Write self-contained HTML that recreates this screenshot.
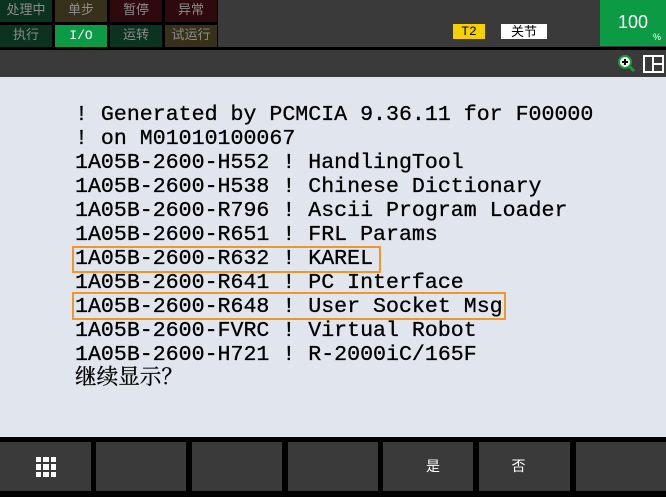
<!DOCTYPE html>
<html><head><meta charset="utf-8"><style>
*{margin:0;padding:0;box-sizing:border-box}
body{width:666px;height:491px;background:#000;position:relative;overflow:hidden;font-family:"Liberation Sans","Noto Sans CJK SC",sans-serif}
.a{position:absolute}
.top{left:0;top:0;width:666px;height:47px;background:#3a3a3a}
.st{position:absolute;width:52px;height:22px;color:#8c8c8c;font-size:13px;text-align:center;line-height:22px;font-family:"Liberation Mono","Noto Sans CJK SC",monospace}
.bar2{left:0;top:50px;width:666px;height:27px;background:#3a3a3a}
.content{left:0;top:77px;width:666px;height:360px;background:#e0e5ee}
pre{position:absolute;left:75px;top:103px;font-family:"Liberation Mono","Noto Serif CJK SC",monospace;font-size:21.6px;line-height:24px;color:#000;-webkit-text-stroke:0.3px #000}
.box{position:absolute;border:2px solid #f0962a}
.btn{position:absolute;top:442px;height:49px;background:#3a3a3a;color:#fff;font-size:14px;text-align:center;line-height:49px}
</style></head><body>
<div class="a top"></div>
<div class="a" style="left:0;top:0;width:218px;height:47px;background:#000"></div>
<div class="st" style="left:0;top:0;background:#0b3320">处理中</div>
<div class="st" style="left:55px;top:0;background:#37301a">单步</div>
<div class="st" style="left:110px;top:0;background:#2e0a0e">暂停</div>
<div class="st" style="left:165px;top:0;background:#2e0a0e">异常</div>
<div class="st" style="left:0;top:25px;background:#0b3320">执行</div>
<div class="st" style="left:55px;top:25px;background:#0c9a45;color:#fff">I/O</div>
<div class="st" style="left:110px;top:25px;background:#0b3320">运转</div>
<div class="st" style="left:165px;top:25px;background:#37301a">试运行</div>
<div class="a" style="left:453px;top:24px;width:32px;height:15px;background:#f7d000;color:#000;font-size:13px;line-height:15px;text-align:center;font-family:'Liberation Mono',monospace">T2</div>
<div class="a" style="left:501px;top:24px;width:46px;height:15px;background:#fff;color:#000;font-size:13px;line-height:15px;text-align:center">关节</div>
<div class="a" style="left:600px;top:0;width:66px;height:46px;background:#0c9a45"></div>
<div class="a" style="left:618px;top:12px;color:#fff;font-size:18px">100</div>
<div class="a" style="left:653px;top:32px;color:#fff;font-size:9px">%</div>
<div class="a bar2"></div>
<svg class="a" style="left:616px;top:53px" width="24" height="22" viewBox="0 0 24 22"><circle cx="9" cy="9" r="6" fill="#fff" stroke="#1a9a3a" stroke-width="2"/><path d="M6 9h6M9 6v6" stroke="#000" stroke-width="2"/><path d="M13 13l5 5" stroke="#1a9a3a" stroke-width="3"/></svg>
<svg class="a" style="left:643px;top:55px" width="21" height="18"><rect x="1" y="1" width="19" height="16" fill="none" stroke="#fff" stroke-width="2"/><path d="M10 1v16M10 9h10" stroke="#fff" stroke-width="2"/></svg>
<div class="a content"></div>
<pre>! Generated by PCMCIA 9.36.11 for F00000
! on M01010100067
1A05B-2600-H552 ! HandlingTool
1A05B-2600-H538 ! Chinese Dictionary
1A05B-2600-R796 ! Ascii Program Loader
1A05B-2600-R651 ! FRL Params
1A05B-2600-R632 ! KAREL
1A05B-2600-R641 ! PC Interface
1A05B-2600-R648 ! User Socket Msg
1A05B-2600-FVRC ! Virtual Robot
1A05B-2600-H721 ! R-2000iC/165F
继续显示？</pre>
<div class="box" style="left:72px;top:246px;width:309px;height:27px"></div>
<div class="box" style="left:72px;top:292px;width:434px;height:28px"></div>
<div class="btn" style="left:0;width:91px"><svg style="margin-top:15px" width="20" height="20"><g fill="#fff"><rect x="0" y="0" width="5" height="5"/><rect x="7" y="0" width="6" height="5"/><rect x="15" y="0" width="5" height="5"/><rect x="0" y="7" width="5" height="6"/><rect x="7" y="7" width="6" height="6"/><rect x="15" y="7" width="5" height="6"/><rect x="0" y="15" width="5" height="5"/><rect x="7" y="15" width="6" height="5"/><rect x="15" y="15" width="5" height="5"/></g></svg></div>
<div class="btn" style="left:96px;width:90px"></div>
<div class="btn" style="left:192px;width:90px"></div>
<div class="btn" style="left:288px;width:90px"></div>
<div class="btn" style="left:383px;width:90px;text-indent:10px">是</div>
<div class="btn" style="left:479px;width:91px;text-indent:-12px">否</div>
<div class="btn" style="left:576px;width:90px"></div>
</body></html>
